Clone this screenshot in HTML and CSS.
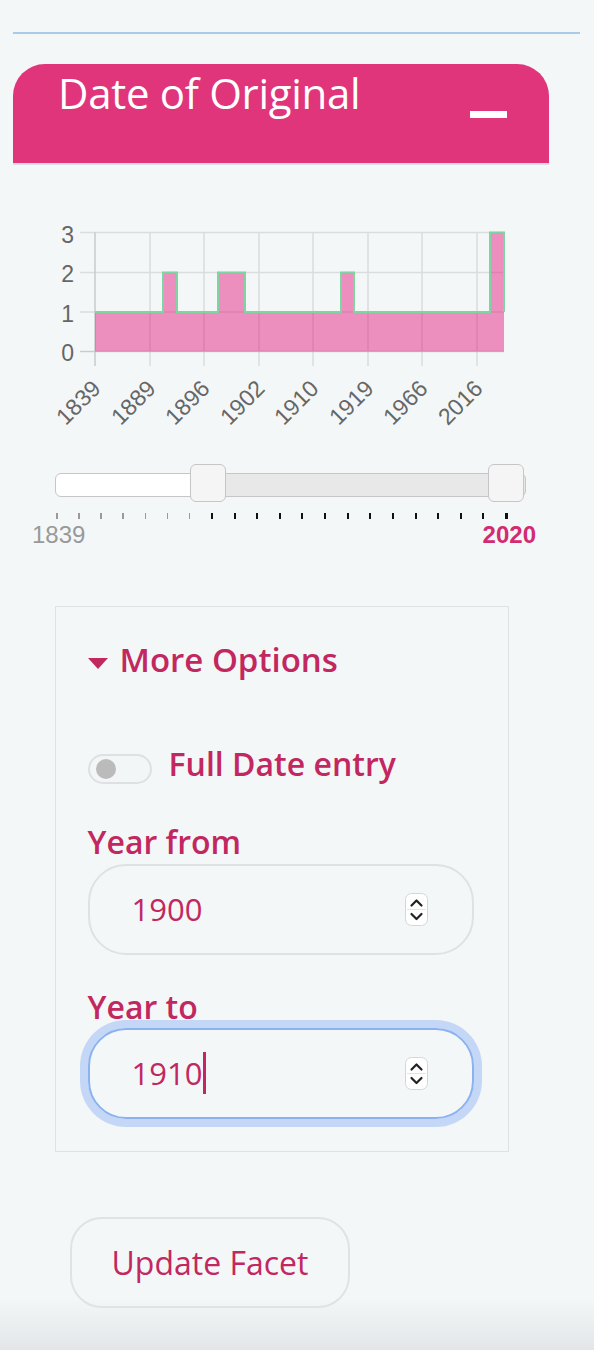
FILE: index.html
```html
<!DOCTYPE html>
<html>
<head>
<meta charset="utf-8">
<link rel="stylesheet" href="styles.css">
</head>
<body>
<div class="page">
  <div class="rule"></div>
  <div class="facet-header">
    <div class="facet-title">Date of Original</div>
    <span class="collapse-bar"></span>
  </div>

  <svg class="chart" width="480" height="230" viewBox="40 210 480 230" xmlns="http://www.w3.org/2000/svg">
    <g stroke="#dadcdd" stroke-width="1.5">
      <line x1="80" y1="232.5" x2="504" y2="232.5"/>
      <line x1="80" y1="272.5" x2="504" y2="272.5"/>
      <line x1="80" y1="312" x2="504" y2="312"/>
      <line x1="150" y1="232.5" x2="150" y2="366"/>
      <line x1="204" y1="232.5" x2="204" y2="366"/>
      <line x1="259" y1="232.5" x2="259" y2="366"/>
      <line x1="313" y1="232.5" x2="313" y2="366"/>
      <line x1="368" y1="232.5" x2="368" y2="366"/>
      <line x1="422" y1="232.5" x2="422" y2="366"/>
      <line x1="477" y1="232.5" x2="477" y2="366"/>
    </g>
    <g stroke="#c9cbcc" stroke-width="1.5">
      <line x1="80" y1="351.5" x2="504" y2="351.5"/>
      <line x1="95" y1="232.5" x2="95" y2="366"/>
    </g>
    <path d="M95,351.5 L95,312 L163,312 L163,272.5 L177,272.5 L177,312 L218,312 L218,272.5 L245,272.5 L245,312 L341,312 L341,272.5 L354,272.5 L354,312 L490,312 L490,232.5 L504,232.5 L504,351.5 Z" fill="rgba(228,38,132,0.5)"/>
    <path d="M95,312 L163,312 L163,272.5 L177,272.5 L177,312 L218,312 L218,272.5 L245,272.5 L245,312 L341,312 L341,272.5 L354,272.5 L354,312 L490,312 L490,232.5 L504,232.5 L504,312" fill="none" stroke="#7fd4a2" stroke-width="2"/>
    <g class="ylab" text-anchor="end">
      <text x="74" y="242.5">3</text>
      <text x="74" y="282">2</text>
      <text x="74" y="321.5">1</text>
      <text x="74" y="360.5">0</text>
    </g>
    <g class="xlab" text-anchor="end">
      <text transform="translate(102,390) rotate(-45)">1839</text>
      <text transform="translate(157,390) rotate(-45)">1889</text>
      <text transform="translate(211,390) rotate(-45)">1896</text>
      <text transform="translate(266,390) rotate(-45)">1902</text>
      <text transform="translate(320,390) rotate(-45)">1910</text>
      <text transform="translate(375,390) rotate(-45)">1919</text>
      <text transform="translate(429,390) rotate(-45)">1966</text>
      <text transform="translate(484,390) rotate(-45)">2016</text>
    </g>
  </svg>

  <div class="slider">
    <div class="track"></div>
    <span class="handle handle-from"></span>
    <span class="handle handle-to"></span>
  </div>
  <div class="ticks">
    <i class="t off"></i><i class="t off"></i><i class="t off"></i><i class="t off"></i><i class="t off"></i><i class="t off"></i><i class="t off"></i>
    <i class="t"></i><i class="t"></i><i class="t"></i><i class="t"></i><i class="t"></i><i class="t"></i><i class="t"></i>
    <i class="t"></i><i class="t"></i><i class="t"></i><i class="t"></i><i class="t"></i><i class="t"></i><i class="t big"></i>
  </div>
  <div class="range-labels">
    <span class="min">1839</span>
    <span class="max">2020</span>
  </div>

  <div class="options">
    <div class="options-toggle">
      <span class="caret"></span>
      <span class="options-title">More Options</span>
    </div>
    <div class="switch-row">
      <span class="switch"><span class="knob"></span></span>
      <span class="switch-label">Full Date entry</span>
    </div>
    <div class="field-label first">Year from</div>
    <div class="input">
      <span class="value">1900</span>
      <svg class="spin" width="23" height="33" viewBox="0 0 23 33" xmlns="http://www.w3.org/2000/svg">
        <rect x="0.5" y="0.5" width="22" height="32" rx="6" fill="#fff" stroke="#d4d6d8"/>
        <line x1="2" y1="16.5" x2="21" y2="16.5" stroke="#e2e4e6"/>
        <polyline points="6.5,12.5 11.5,7.5 16.5,12.5" fill="none" stroke="#222" stroke-width="2.2" stroke-linecap="round" stroke-linejoin="round"/>
        <polyline points="6.5,21 11.5,26 16.5,21" fill="none" stroke="#222" stroke-width="2.2" stroke-linecap="round" stroke-linejoin="round"/>
      </svg>
    </div>
    <div class="field-label">Year to</div>
    <div class="input focused">
      <span class="value">1910<span class="cursor"></span></span>
      <svg class="spin" width="23" height="33" viewBox="0 0 23 33" xmlns="http://www.w3.org/2000/svg">
        <rect x="0.5" y="0.5" width="22" height="32" rx="6" fill="#fff" stroke="#d4d6d8"/>
        <line x1="2" y1="16.5" x2="21" y2="16.5" stroke="#e2e4e6"/>
        <polyline points="6.5,12.5 11.5,7.5 16.5,12.5" fill="none" stroke="#222" stroke-width="2.2" stroke-linecap="round" stroke-linejoin="round"/>
        <polyline points="6.5,21 11.5,26 16.5,21" fill="none" stroke="#222" stroke-width="2.2" stroke-linecap="round" stroke-linejoin="round"/>
      </svg>
    </div>
  </div>

  <button class="update">Update Facet</button>
</div>
</body>
</html>
```
FILE: styles.css
```css
html {
  background: linear-gradient(to bottom, #f4f7f8 0, #f4f7f8 1298px, #e3e6e8 1350px);
  min-height: 1350px;
}
body {
  margin: 0;
  font-family: "Open Sans", sans-serif;
}
.page {
  padding-left: 13px;
  padding-top: 32px;
  height: 1318px;
}
.rule {
  width: 567px;
  border-top: 2px solid #a9cbe8;
}
.facet-header {
  margin-top: 30px;
  width: 536px;
  height: 101px;
  box-sizing: border-box;
  background: #e0357a;
  border-radius: 32px 32px 0 0;
  border-bottom: 2px solid #d8dde0;
  display: flex;
  justify-content: space-between;
  align-items: flex-start;
}
.facet-title {
  color: #fff;
  font-size: 42px;
  line-height: 42px;
  margin-top: 8px;
  margin-left: 45px;
  letter-spacing: -0.3px;
}
.collapse-bar {
  display: block;
  width: 37px;
  height: 7px;
  background: #fff;
  margin-top: 47px;
  margin-right: 42px;
}
.chart {
  display: block;
  margin-top: 45px;
  margin-left: 27px;
  font-family: "Liberation Sans", Arial, sans-serif;
}
.ylab text, .xlab text {
  font-size: 23px;
  fill: #666;
}
.slider {
  position: relative;
  margin-top: 24px;
  margin-left: 42px;
  width: 471px;
  height: 38px;
}
.track {
  position: relative;
  top: 9px;
  height: 24px;
  box-sizing: border-box;
  border: 1.5px solid #c6c6c6;
  border-radius: 6px;
  background: linear-gradient(to right, #fff 0, #fff 140px, #e8e8e8 140px);
}
.handle {
  position: absolute;
  top: 0;
  width: 36px;
  height: 38px;
  box-sizing: border-box;
  border: 1.5px solid #c6c6c6;
  border-radius: 6px;
  background: #f5f5f5;
}
.handle-from { left: 135px; }
.handle-to { left: 433px; }
.ticks {
  margin-top: 11px;
  margin-left: 43px;
  width: 452px;
  height: 6px;
  display: flex;
  justify-content: space-between;
  align-items: flex-start;
}
.t {
  display: block;
  width: 2px;
  height: 6px;
  background: #111;
}
.t.off { background: #9a9a9a; width: 1.5px; }
.t.big { width: 3px; height: 6px; }
.range-labels {
  margin-top: 4px;
  margin-left: 19px;
  width: 504px;
  display: flex;
  justify-content: space-between;
  font-family: "Liberation Sans", Arial, sans-serif;
  font-size: 24px;
  line-height: 24px;
}
.range-labels .min { color: #999; }
.range-labels .max { color: #d42a72; font-weight: bold; }
.options {
  margin-top: 59px;
  margin-left: 42px;
  width: 454px;
  box-sizing: border-box;
  border: 1.5px solid #dde2e5;
  padding: 35.5px 0 32.5px 31.5px;
  color: #c2285f;
}
.options-toggle {
  display: flex;
  align-items: flex-start;
}
.caret {
  display: block;
  width: 0;
  height: 0;
  border-left: 10px solid transparent;
  border-right: 10px solid transparent;
  border-top: 11px solid #c2285f;
  margin-top: 15px;
  margin-right: 12px;
}
.options-title {
  font-size: 33px;
  line-height: 33px;
  font-weight: 600;
}
.switch-row {
  margin-top: 72px;
  display: flex;
  align-items: flex-start;
}
.switch {
  display: flex;
  align-items: center;
  width: 64px;
  height: 30px;
  box-sizing: border-box;
  border: 2px solid #dde1e4;
  border-radius: 15px;
  background: #f3f6f7;
  margin-top: 6px;
  margin-right: 17px;
  padding-left: 6px;
}
.knob {
  display: block;
  width: 20px;
  height: 20px;
  border-radius: 50%;
  background: #bbbbbb;
}
.switch-label {
  font-size: 32px;
  line-height: 32px;
  font-weight: 600;
}
.field-label {
  font-size: 32px;
  line-height: 32px;
  font-weight: 600;
  margin-top: 36px;
  margin-bottom: 5px;
}
.field-label.first {
  margin-top: 42px;
  margin-bottom: 6px;
}
.input {
  width: 386px;
  height: 91px;
  box-sizing: border-box;
  border: 2px solid #dfe2e4;
  border-radius: 38px;
  display: flex;
  align-items: center;
  justify-content: space-between;
  padding-left: 42px;
  padding-right: 44px;
}
.input.focused {
  border-color: #8ab2f2;
  box-shadow: 0 0 0 8px #c5d7f6;
}
.value {
  font-size: 31px;
  line-height: 31px;
  color: #c2285f;
  display: flex;
  align-items: center;
}
.cursor {
  display: block;
  width: 2.5px;
  height: 42px;
  background: #c2285f;
  margin-left: 1px;
}
.spin { display: block; }
.update {
  display: block;
  margin-top: 65px;
  margin-left: 57px;
  width: 280px;
  height: 91px;
  box-sizing: border-box;
  border: 2px solid #dfe3e6;
  border-radius: 32px;
  background: transparent;
  font-family: "Open Sans", sans-serif;
  font-size: 32px;
  color: #c2285f;
  padding: 0;
}
```
